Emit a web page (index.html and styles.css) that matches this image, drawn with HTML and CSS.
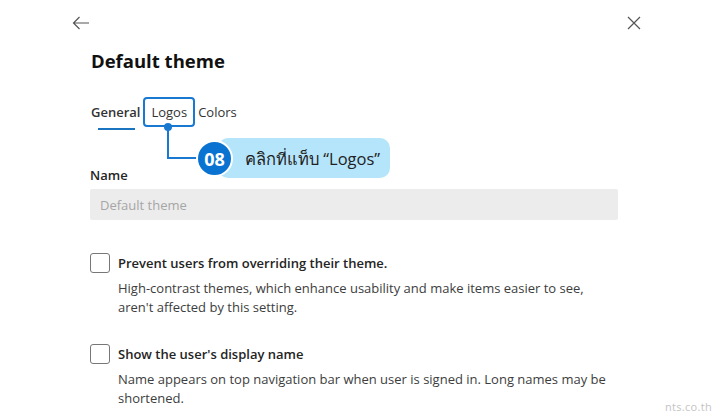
FILE: index.html
```html
<!DOCTYPE html>
<html lang="en">
<head>
<meta charset="UTF-8">
<meta name="viewport" content="width=device-width, initial-scale=1.0">
<title>Default theme</title>
<link rel="stylesheet" href="styles.css">
</head>
<body>

<div class="panel">
    <div class="topbar">
        <button class="icon-btn" aria-label="Back">
            <svg width="18" height="14" viewBox="0 0 18 14"><path d="M17 7H1.5M7.5 1L1.5 7l6 6" fill="none" stroke="#555" stroke-width="1.2"/></svg>
        </button>
        <button class="icon-btn" aria-label="Close">
            <svg width="14" height="14" viewBox="0 0 14 14"><path d="M1 1l12 12M13 1L1 13" fill="none" stroke="#555" stroke-width="1.2"/></svg>
        </button>
    </div>

    <div class="content">
        <h1>Default theme</h1>

        <div class="tabs">
            <div class="tab active">General</div>
            <div class="tab focused">Logos</div>
            <div class="tab">Colors</div>

            <!-- step callout pointing at the Logos tab -->
            <div class="callout-dot"></div>
            <div class="callout-line"></div>
            <div class="callout-pill">คลิกที่แท็บ “Logos”</div>
            <div class="callout-num">08</div>
        </div>

        <label class="field-label">Name</label>
        <div class="field">Default theme</div>

        <div class="option">
            <span class="checkbox"></span>
            <div>
                <div class="option-title">Prevent users from overriding their theme.</div>
                <div class="option-desc">High-contrast themes, which enhance usability and make items easier to see, aren't affected by this setting.</div>
            </div>
        </div>

        <div class="option">
            <span class="checkbox"></span>
            <div>
                <div class="option-title">Show the user's display name</div>
                <div class="option-desc">Name appears on top navigation bar when user is signed in. Long names may be shortened.</div>
            </div>
        </div>
    </div>

    <div class="watermark">nts.co.th</div>
</div>

</body>
</html>
```

FILE: styles.css
```css
body {
    font-family: "Open Sans", "Noto Sans", sans-serif;
    margin: 0;
    background: #fff;
    color: #242424;
}
.panel {
    position: relative;
    width: 720px;
    height: 414px;
    overflow: hidden;
}
.topbar {
    display: flex;
    justify-content: space-between;
    padding: 14px 79px 0 72px;
    height: 18px;
}
.icon-btn {
    background: none;
    border: 0;
    padding: 0;
    display: flex;
    align-items: center;
}
.content {
    padding: 0 102px 0 90px;
}
h1 {
    font-size: 18.5px;
    font-weight: 700;
    margin: 16px 0 0 1px;
    line-height: 26px;
    color: #111;
}
.tabs {
    position: relative;
    display: flex;
    align-items: center;
    margin-top: 22px;
    height: 32px;
    font-size: 13px;
}
.tab {
    padding: 0 2px;
    color: #333;
}
.tab.active {
    position: relative;
    font-weight: 600;
    padding-left: 1px;
}
.tab.active::after {
    content: "";
    position: absolute;
    left: 8px;
    right: 7px;
    bottom: -9px;
    height: 2px;
    background: #1b74c0;
}
.tab.focused {
    border: 2px solid #1979d0;
    border-radius: 4px;
    padding: 5px 6px;
    line-height: 16px;
    margin: 0 1px;
}
.callout-dot {
    position: absolute;
    left: 74px;
    top: 27px;
    width: 8px;
    height: 8px;
    border-radius: 50%;
    background: #1979d0;
}
.callout-line {
    position: absolute;
    left: 77px;
    top: 31px;
    width: 30px;
    height: 30px;
    border-left: 2px solid #1979d0;
    border-bottom: 2px solid #1979d0;
}
.callout-pill {
    position: absolute;
    left: 128px;
    top: 42px;
    height: 40px;
    line-height: 41px;
    padding: 0 10px 0 27px;
    background: #b5e5fb;
    border-radius: 10px;
    white-space: nowrap;
    font-size: 16.5px;
    color: #222;
}
.callout-num {
    position: absolute;
    left: 106px;
    top: 44px;
    width: 33px;
    height: 33px;
    border: 2px solid #fff;
    border-radius: 50%;
    background: #0a73d1;
    color: #fff;
    font-size: 18px;
    font-weight: 700;
    display: flex;
    align-items: center;
    justify-content: center;
}
.field-label {
    display: block;
    margin-top: 38px;
    font-size: 13px;
    font-weight: 600;
    line-height: 18px;
}
.field {
    margin-top: 5px;
    height: 31px;
    line-height: 33px;
    padding-left: 10px;
    background: #ececec;
    color: #a6a6a6;
    font-size: 13px;
    border-radius: 2px;
}
.option {
    display: flex;
    gap: 8px;
    margin-top: 33px;
    font-size: 13px;
}
.option + .option {
    margin-top: 27px;
}
.checkbox {
    flex: none;
    width: 18px;
    height: 18px;
    border: 1px solid #777;
    border-radius: 3px;
}
.option-title {
    font-weight: 600;
    line-height: 20px;
}
.option-desc {
    margin-top: 6px;
    line-height: 19px;
    color: #3d3d3d;
}
.watermark {
    position: absolute;
    right: 8px;
    bottom: 0;
    font-size: 11px;
    color: #c4c4c4;
    letter-spacing: 0.3px;
}
```
